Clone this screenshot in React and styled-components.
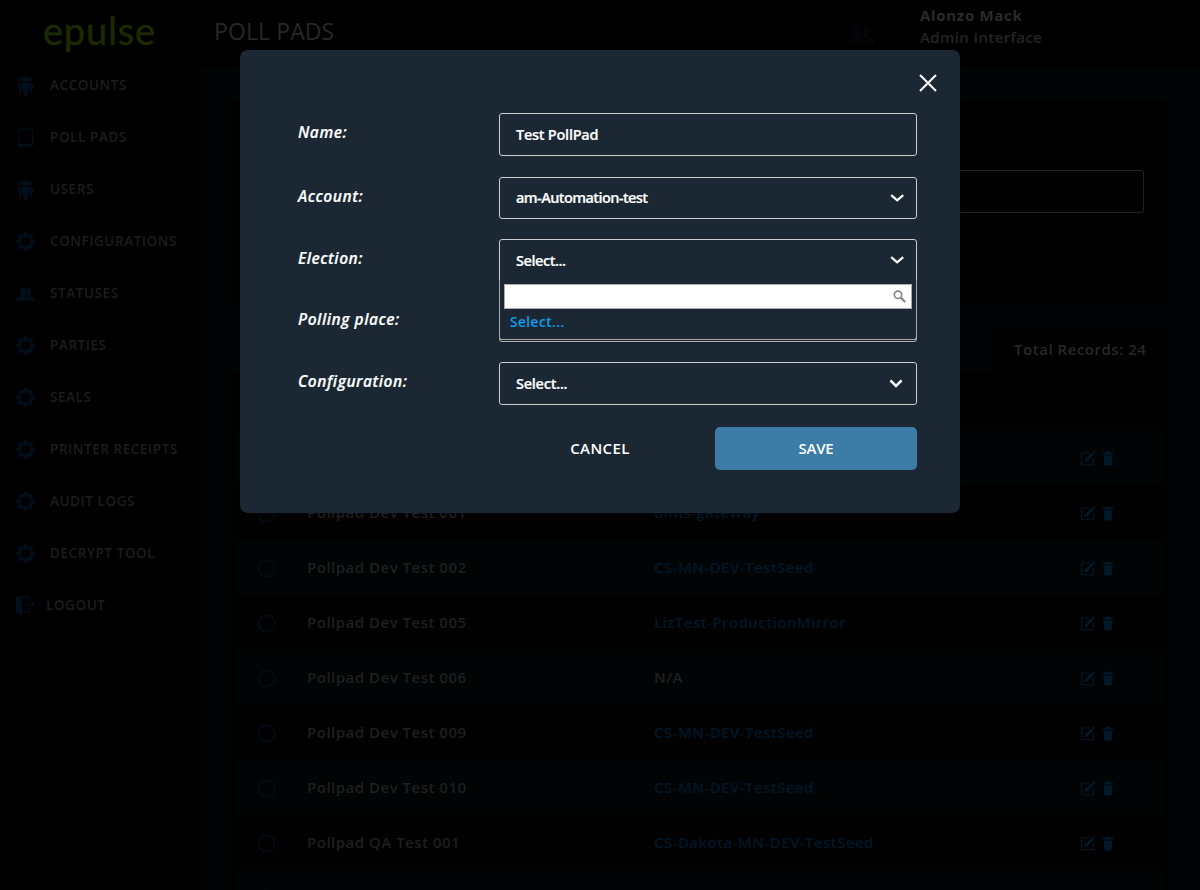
import React from "react";
import styled, { createGlobalStyle } from "styled-components";

const Global = createGlobalStyle`
  *, *::before, *::after { box-sizing: border-box; }
  body {
    margin: 0;
    background: #000;
    font-family: "Open Sans", sans-serif;
    overflow: hidden;
  }
`;

const Page = styled.div`
  position: relative;
  display: grid;
  grid-template-columns: 200px 1fr;
  width: 1200px;
  height: 890px;
  overflow: hidden;
  background: #000;
`;

const Sidebar = styled.nav`
  display: flex;
  flex-direction: column;
`;

const Logo = styled.div`
  height: 59px;
  padding-left: 43px;
  font-family: Lato, sans-serif;
  font-size: 38px;
  line-height: 60px;
  letter-spacing: 0.8px;
  color: #1b2a00;
  -webkit-text-stroke: 0.5px;
  white-space: nowrap;
`;

const NavItem = styled.a`
  display: grid;
  grid-template-columns: ${(p) => (p.$tight ? "30px" : "34px")} 1fr;
  align-items: center;
  height: 52px;
  padding-left: 16px;
  font-size: 13.5px;
  font-weight: 600;
  letter-spacing: 0.58px;
  line-height: 18px;
  color: #1d1d1d;
  white-space: nowrap;

  svg { display: block; color: #010f1a; margin-top: 1px; }
`;

const Main = styled.div`
  display: flex;
  flex-direction: column;
  min-width: 0;
`;

const Header = styled.header`
  display: flex;
  align-items: flex-start;
  height: 68px;
  flex: none;
  padding-left: 14px;
`;

const Title = styled.h1`
  width: 632px;
  margin: 15px 0 0;
  font-size: 23px;
  font-weight: 400;
  letter-spacing: 0.1px;
  line-height: 32px;
  color: #272727;
`;

const UserIcon = styled.div`
  width: 74px;
  padding-top: 24px;
  color: #030508;
  svg { display: block; }
`;

const User = styled.div`
  padding-top: 4px;
  font-size: 15px;
  line-height: 22px;
  letter-spacing: 0.38px;
  font-weight: 600;
  color: #242424;
`;

const UserName = styled.div`
  font-weight: 700;
  letter-spacing: 0.7px;
  color: #2a2a2a;
`;

const Content = styled.main`
  flex: 1;
  min-height: 0;
  padding: 32px;
  background: #010405;
  overflow: hidden;
`;

const FilterPanel = styled.section`
  height: 204px;
  padding: 70px 24px 0;
  background: #010101;
`;

const FilterInput = styled.div`
  height: 43px;
  border: 1px solid #222;
  border-radius: 3px;
`;

const RecordsTab = styled.div`
  width: 175px;
  height: 43px;
  margin: 24px 0 0 auto;
  padding-left: 21px;
  background: #010101;
  font-size: 15px;
  font-weight: 600;
  letter-spacing: 0.53px;
  line-height: 43px;
  color: #272727;
  white-space: nowrap;
`;

const Table = styled.section`
  padding: 59px 4px 0;
  background: #010101;
`;

const Row = styled.div`
  display: grid;
  grid-template-columns: 71px 347px 1fr auto;
  align-items: center;
  height: 55px;
  padding: 0 51px 2px 0;
  background: ${(p) => (p.$shaded ? "#010405" : "transparent")};
  font-size: 15px;
  font-weight: 600;
  letter-spacing: 0.5px;
  line-height: 22px;
  color: #1f1f1f;
  white-space: nowrap;
`;

const Radio = styled.span`
  width: 17px;
  height: 17px;
  margin: 3px 0 0 22px;
  border: 1px solid #01121f;
  border-radius: 50%;
  box-shadow: 0 0 0 0.5px #01121f;
`;

const Cell = styled.span`
  letter-spacing: ${(p) => (p.$link ? "0.45px" : "inherit")};
  color: ${(p) => (p.$link ? "#001727" : "inherit")};
`;

const Actions = styled.span`
  display: flex;
  gap: 8px;
  margin-top: 3px;
  color: #001a29;
  svg { display: block; flex: none; }
`;

const Modal = styled.div`
  position: absolute;
  left: 240px;
  top: 50px;
  width: 720px;
  height: 463px;
  padding: 63px 43px 0 58px;
  border-radius: 8px;
  background: #1b2834;
  color: #fff;
`;

const CloseButton = styled.button`
  position: absolute;
  right: 23px;
  top: 24px;
  padding: 0;
  border: 0;
  background: none;
  color: #fff;
  svg { display: block; }
`;

const Field = styled.div`
  display: grid;
  grid-template-columns: 201px 418px;
  align-items: start;
  height: ${(p) => p.$h}px;
`;

const Label = styled.label`
  padding-top: 8px;
  font-size: 15.5px;
  font-style: italic;
  font-weight: 600;
  -webkit-text-stroke: 0.2px;
  letter-spacing: 0.54px;
  line-height: 22px;
`;

const Control = styled.div`
  position: relative;
  display: flex;
  align-items: center;
  justify-content: space-between;
  height: ${(p) => p.$h}px;
  padding: 0 ${(p) => (p.$native ? 13 : 12)}px 0 16px;
  border: 1px solid #ccc;
  border-radius: ${(p) => (p.$open ? "3px 3px 0 0" : "3px")};
  font-size: 14.5px;
  font-weight: 600;
  line-height: 20px;
`;

const Value = styled.span`
  padding-top: ${(p) => (p.$low ? 2 : 0)}px;
  letter-spacing: ${(p) => p.$ls}px;
  -webkit-text-stroke: 0.2px;
`;

const Dropdown = styled.div`
  position: absolute;
  left: -1px;
  right: -1px;
  top: 40px;
  height: 60px;
  z-index: 2;
  padding: 4px 4px 0;
  border: 1px solid #aaa;
  border-top: 0;
  border-radius: 0 0 3px 3px;
  background: #1b2834;
  box-shadow: 0 4px 5px rgba(0, 0, 0, 0.15);
`;

const SearchBox = styled.div`
  display: flex;
  align-items: center;
  justify-content: flex-end;
  height: 25px;
  padding-right: 5px;
  border: 1px solid #aaa;
  background: #fff;
  color: #888;
  svg { display: block; margin-bottom: 1px; }
`;

const Option = styled.div`
  padding: 4px 0 0 6px;
  font-size: 13.5px;
  letter-spacing: 0.55px;
  line-height: 18px;
  color: #08a0f0;
`;

const Buttons = styled.div`
  display: grid;
  grid-template-columns: 202px 202px;
  gap: 14px;
  padding-left: 201px;
`;

const Button = styled.button`
  height: 43px;
  padding: 0 0 1px;
  border: 0;
  border-radius: 5px;
  background: ${(p) => (p.$primary ? "#3d7ca6" : "none")};
  font-family: inherit;
  font-size: 15px;
  font-weight: 600;
  letter-spacing: ${(p) => (p.$primary ? "-0.2px" : "0.4px")};
  color: #fff;
`;

const GroupIcon = () => (
  <svg width="19" height="20" viewBox="0 0 19 20" fill="currentColor">
    <circle cx="4.600" cy="3.400" r="2" />
    <circle cx="14.400" cy="3.400" r="2" />
    <circle cx="9.500" cy="3" r="2.700" />
    <path d="M4.600 6.800c-2 0-3 .8-3 2.400v3.300h1.200l.6 5.300h2.100l-.7-4.500V8z" />
    <path d="M14.400 6.800c2 0 3 .8 3 2.400v3.300h-1.200l-.6 5.300h-2.100l.7-4.500V8z" />
    <path d="M6.800 6.600h5.400c.9 0 1.400.6 1.400 1.500V13h-1.400l-.9 6.500H7.700L6.800 13H5.400V8.100c0-.9.500-1.500 1.400-1.500z" />
  </svg>
);

const TabletIcon = () => (
  <svg width="19" height="20" viewBox="0 0 19 20" fill="none">
    <rect x="2.800" y="1.200" width="13.600" height="17.400" rx="1.400" stroke="currentColor" strokeWidth="1.300" />
    <path d="M3 16h13.200v2.400H3z" fill="currentColor" />
    <circle cx="9.600" cy="17.400" r="0.700" fill="#000" />
  </svg>
);

const GearIcon = () => (
  <svg width="19" height="19" viewBox="-9.500 -9.500 19 19" fill="none">
    <circle r="6.400" stroke="currentColor" strokeWidth="2.800" />
    {[0, 45, 90, 135, 180, 225, 270, 315].map((a) => (
      <path key={a} d="M-2.400 -6.800L-1.200 -9.400H1.200L2.400 -6.800z" fill="currentColor" transform={`rotate(${a})`} />
    ))}
  </svg>
);

const PeopleIcon = ({ width = 19, height = 14 }) => (
  <svg width={width} height={height} viewBox="0 0 30 21" preserveAspectRatio="none" fill="currentColor">
    <path d="M0 20.500c0-3 1.400-4.400 4.600-5.400 2.500-.8 3.600-1.400 3.600-2.800 0-.8-1.700-2.400-1.700-6C6.500 2.200 8.300 0 11.200 0s4.700 2.200 4.700 6.300c0 3.600-1.700 5.200-1.700 6 0 1.400 1.100 2 3.600 2.800 3.200 1 4.400 2.400 4.400 5.400z" />
    <path d="M17.200 2.700c.8-.6 1.700-.9 2.800-.9 2.500 0 4.100 1.900 4.100 5.400 0 3.200-1.500 4.500-1.500 5.300 0 1.100 1 1.700 3.100 2.400 3 1 4.300 2.400 4.300 5.600h-6.600c0-3.100-1.300-5.200-5.200-6.500-1.200-.4-2.200-.8-2.200-1.500 0-.8 1.600-2.200 1.600-6.200 0-1.400-.1-2.600-.4-3.600z" />
  </svg>
);

const LogoutIcon = () => (
  <svg width="19" height="19" viewBox="0 0 19 19" fill="none">
    <path d="M0 .5L6 3v16L0 16.600z" fill="currentColor" />
    <path d="M.5 1h13v4M6 15.800h7.500V12M8 8.600h8.500" stroke="currentColor" strokeWidth="1.300" />
    <path d="M15.200 5.500L19 8.600l-3.800 3.100z" fill="currentColor" />
  </svg>
);

const EditIcon = () => (
  <svg width="14" height="15" viewBox="0 0 14 15" fill="none">
    <path d="M8 2H.7v11.800h11.800V7" stroke="currentColor" strokeWidth="1.100" />
    <path d="M3.300 11.200l.9-3L10.500 2l2 2-6.300 6.200zM11 1.500l1-1a.8.8 0 011.100 0l.8.800a.8.800 0 010 1.100l-1 1z" fill="currentColor" />
  </svg>
);

const TrashIcon = () => (
  <svg width="10" height="15" viewBox="0 0 10 15" fill="currentColor">
    <path d="M0 1.500h3l.6-1h2.800l.6 1h3V3.600H0zM.6 4.600h8.800l-.7 9c-.1.600-.4.900-.9.900H2.200c-.5 0-.8-.3-.9-.9z" />
  </svg>
);

const Chevron = ({ heavy }) => (
  <svg width="14" height="9" viewBox="0 0 14 9" fill="none">
    <path
      d={heavy ? "M1.400 1.300L7 7l5.600-5.700" : "M1.200 1.200L7.200 6.300l6-5.100"}
      stroke="#fff"
      strokeWidth={heavy ? 2.500 : 2.200}
    />
  </svg>
);

const CloseIcon = () => (
  <svg width="18" height="18" viewBox="0 0 18 18" fill="none">
    <path d="M1 1l16 16M17 1L1 17" stroke="currentColor" strokeWidth="2" />
  </svg>
);

const SearchIcon = () => (
  <svg width="13" height="13" viewBox="0 0 13 13" fill="none" stroke="currentColor">
    <circle cx="5" cy="4.800" r="3.700" strokeWidth="1.700" />
    <path d="M7.800 7.600l4.400 4.400" strokeWidth="2.200" />
  </svg>
);

const navItems = [
  ["ACCOUNTS", GroupIcon],
  ["POLL PADS", TabletIcon],
  ["USERS", GroupIcon],
  ["CONFIGURATIONS", GearIcon],
  ["STATUSES", PeopleIcon],
  ["PARTIES", GearIcon],
  ["SEALS", GearIcon],
  ["PRINTER RECEIPTS", GearIcon],
  ["AUDIT LOGS", GearIcon],
  ["DECRYPT TOOL", GearIcon],
  ["LOGOUT", LogoutIcon],
];

const rows = [
  ["", ""],
  ["Pollpad Dev Test 001", "dims-gateway"],
  ["Pollpad Dev Test 002", "CS-MN-DEV-TestSeed"],
  ["Pollpad Dev Test 005", "LizTest-ProductionMirror"],
  ["Pollpad Dev Test 006", "N/A"],
  ["Pollpad Dev Test 009", "CS-MN-DEV-TestSeed"],
  ["Pollpad Dev Test 010", "CS-MN-DEV-TestSeed"],
  ["Pollpad QA Test 001", "CS-Dakota-MN-DEV-TestSeed"],
  ["", ""],
];

export default function App() {
  return (
    <Page>
      <Global />
      <Sidebar>
        <Logo>epulse</Logo>
        {navItems.map(([name, Icon]) => (
          <NavItem key={name} $tight={name === "LOGOUT"}>
            <Icon />
            {name}
          </NavItem>
        ))}
      </Sidebar>

      <Main>
        <Header>
          <Title>POLL PADS</Title>
          <UserIcon>
            <PeopleIcon width={29} height={20} />
          </UserIcon>
          <User>
            <UserName>Alonzo Mack</UserName>
            Admin Interface
          </User>
        </Header>
        <Content>
          <FilterPanel>
            <FilterInput />
          </FilterPanel>
          <RecordsTab>Total Records: 24</RecordsTab>
          <Table>
            {rows.map(([name, election], i) => (
              <Row key={i} $shaded={i % 2 === 0}>
                <Radio />
                <Cell>{name}</Cell>
                <Cell $link={election !== "N/A"}>{election}</Cell>
                <Actions>
                  <EditIcon />
                  <TrashIcon />
                </Actions>
              </Row>
            ))}
          </Table>
        </Content>
      </Main>

      <Modal role="dialog">
        <CloseButton aria-label="Close">
          <CloseIcon />
        </CloseButton>
        <Field $h={64}>
          <Label>Name:</Label>
          <Control $h={43}>
            <Value $ls={-0.25}>Test PollPad</Value>
          </Control>
        </Field>
        <Field $h={62}>
          <Label>Account:</Label>
          <Control $h={42}>
            <Value $ls={-0.58}>am-Automation-test</Value>
            <Chevron />
          </Control>
        </Field>
        <Field $h={61}>
          <Label>Election:</Label>
          <Control $h={42} $open>
            <Value $low $ls={-0.45}>Select...</Value>
            <Chevron />
            <Dropdown>
              <SearchBox>
                <SearchIcon />
              </SearchBox>
              <Option>Select...</Option>
            </Dropdown>
          </Control>
        </Field>
        <Field $h={62}>
          <Label>Polling place:</Label>
          <Control $h={42} />
        </Field>
        <Field $h={65}>
          <Label>Configuration:</Label>
          <Control $h={43} $native>
            <Value $ls={-0.25}>Select...</Value>
            <Chevron heavy />
          </Control>
        </Field>
        <Buttons>
          <Button>CANCEL</Button>
          <Button $primary>SAVE</Button>
        </Buttons>
      </Modal>
    </Page>
  );
}
